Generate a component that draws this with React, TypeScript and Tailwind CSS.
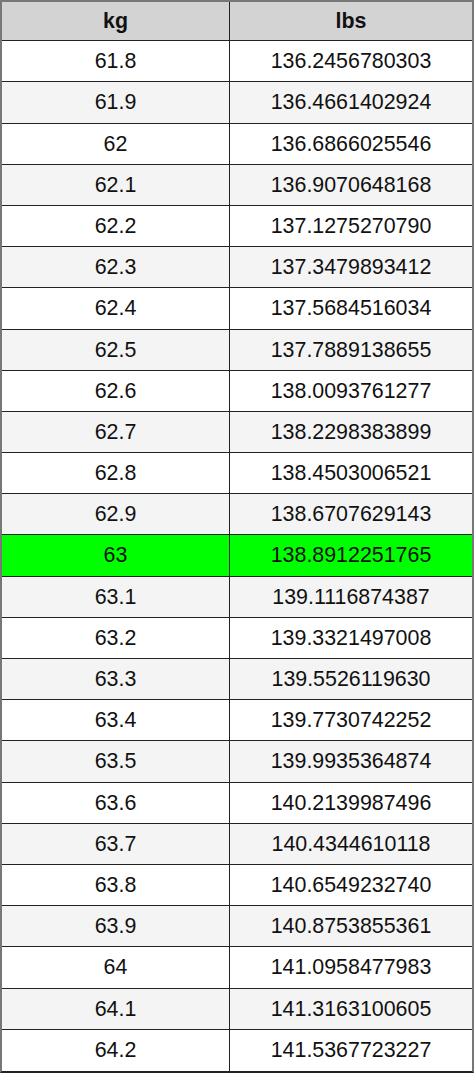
const rows: [string, string][] = [
  ['61.8', '136.2456780303'],
  ['61.9', '136.4661402924'],
  ['62', '136.6866025546'],
  ['62.1', '136.9070648168'],
  ['62.2', '137.1275270790'],
  ['62.3', '137.3479893412'],
  ['62.4', '137.5684516034'],
  ['62.5', '137.7889138655'],
  ['62.6', '138.0093761277'],
  ['62.7', '138.2298383899'],
  ['62.8', '138.4503006521'],
  ['62.9', '138.6707629143'],
  ['63', '138.8912251765'],
  ['63.1', '139.1116874387'],
  ['63.2', '139.3321497008'],
  ['63.3', '139.5526119630'],
  ['63.4', '139.7730742252'],
  ['63.5', '139.9935364874'],
  ['63.6', '140.2139987496'],
  ['63.7', '140.4344610118'],
  ['63.8', '140.6549232740'],
  ['63.9', '140.8753855361'],
  ['64', '141.0958477983'],
  ['64.1', '141.3163100605'],
  ['64.2', '141.5367723227'],
]

export default function App() {
  return (
    <div className="w-[474px] h-[1077px] bg-white font-['Liberation_Sans',Arial,sans-serif] text-[21.4px] text-[#111]">
      <div className="w-[474px] border-t-2 border-x-2 border-b-2 border-t-[#777] border-x-[#777] border-b-[#222]">
        <div className="flex h-[39.2px] bg-[#d3d3d3] border-b border-[#222] font-bold">
          <div className="w-[228px] border-r border-[#222] flex items-center justify-center">kg</div>
          <div className="flex-1 flex items-center justify-center">lbs</div>
        </div>
        {rows.map(([kg, lbs], i) => {
          const hi = kg === '63'
          const bg = hi ? 'bg-[#00ff00]' : i % 2 === 1 ? 'bg-[#f4f4f4]' : 'bg-white'
          const last = i === rows.length - 1
          return (
            <div key={kg} className={`flex h-[41.2px] ${bg} ${last ? '' : 'border-b border-[#222]'}`}>
              <div className="w-[228px] border-r border-[#222] flex items-center justify-center">{kg}</div>
              <div className="flex-1 flex items-center justify-center">{lbs}</div>
            </div>
          )
        })}
      </div>
    </div>
  )
}
